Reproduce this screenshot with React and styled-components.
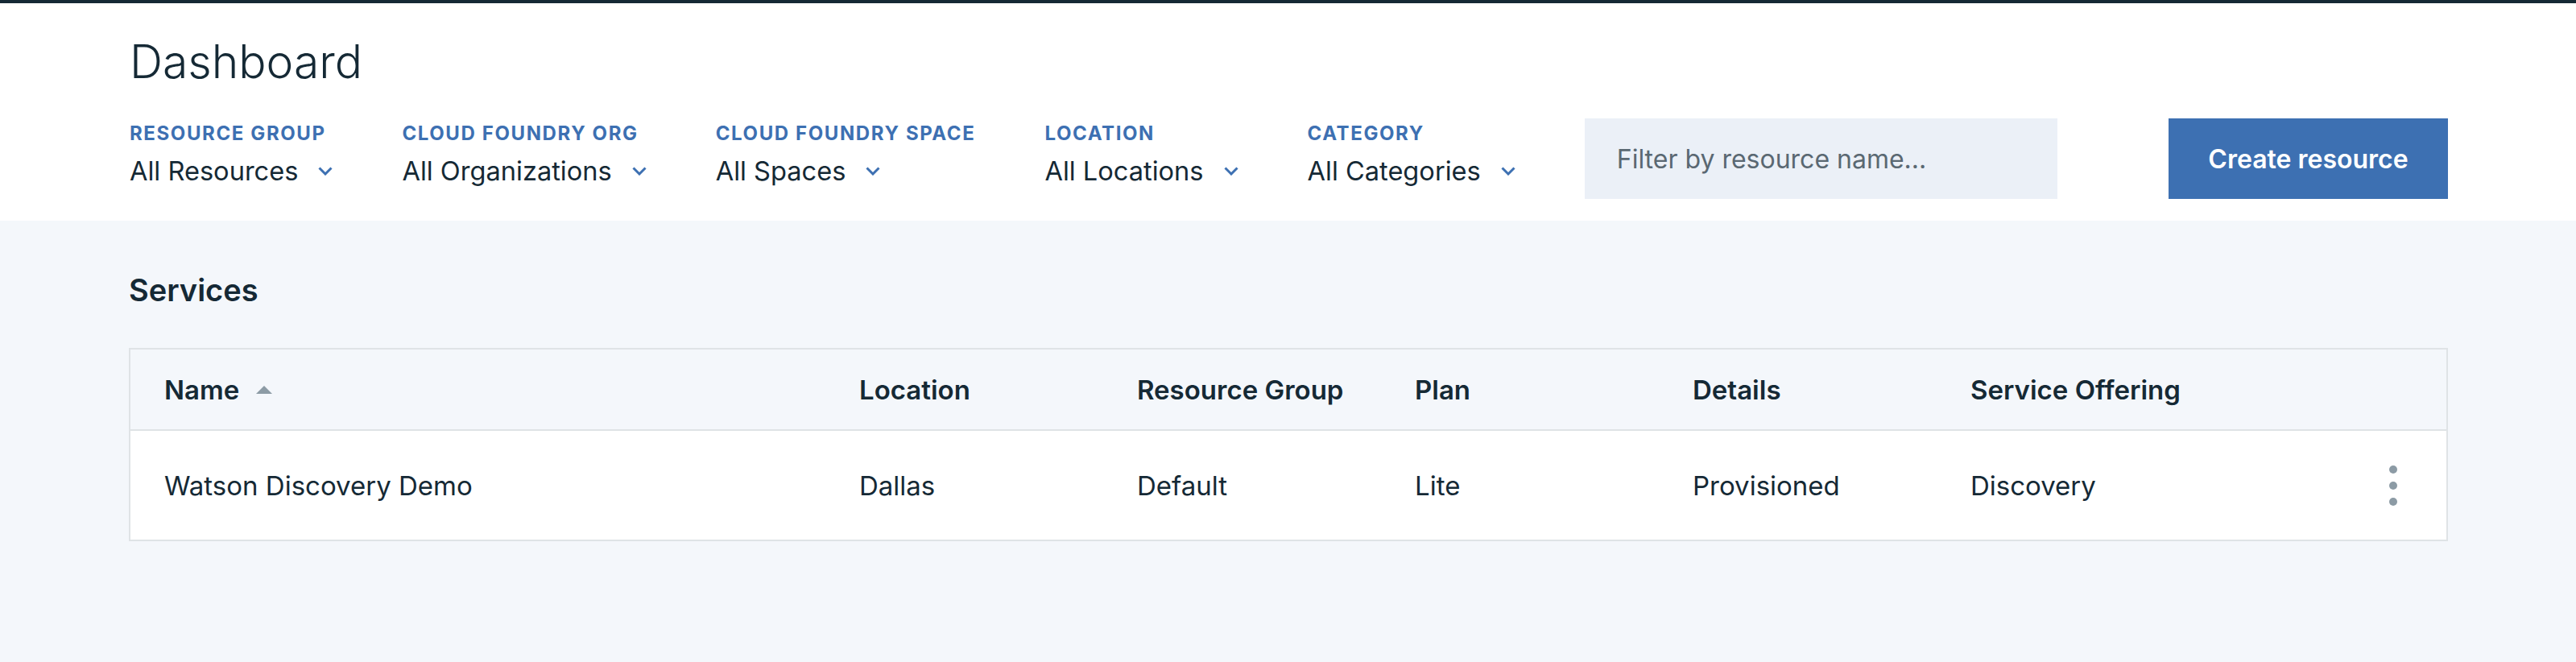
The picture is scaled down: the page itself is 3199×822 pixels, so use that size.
import React from 'react'
import styled, { createGlobalStyle } from 'styled-components'

const GlobalStyle = createGlobalStyle`
  body {
    margin: 0;
    background: #f4f7fb;
    color: #152935;
    font-family: Inter, 'Noto Sans', sans-serif;
  }
`

const Header = styled.header`
  background: #ffffff;
  border-top: 4px solid #152935;
  padding: 41px 159px 27px 161px;
`

const Title = styled.h1`
  margin: 0;
  font-size: 57px;
  font-weight: 300;
  line-height: 64px;
`

const Toolbar = styled.div`
  display: flex;
  align-items: flex-start;
  margin-top: 38px;
`

const Filter = styled.div`
  display: flex;
  flex-direction: column;
  padding-top: 7px;
  margin-right: 86px;
`

const FilterLabel = styled.span`
  font-size: 24px;
  font-weight: 700;
  line-height: 24px;
  letter-spacing: 1.6px;
  color: #3d70b2;
  text-transform: uppercase;
`

const FilterValue = styled.button`
  display: flex;
  align-items: center;
  gap: 25px;
  margin-top: 14px;
  padding: 0;
  border: none;
  background: none;
  font-family: inherit;
  font-size: 32.6px;
  line-height: 40px;
  color: #152935;
  cursor: pointer;
`

const Search = styled.input`
  width: 587px;
  height: 100px;
  box-sizing: border-box;
  padding: 0 40px;
  border: none;
  background: #ebf0f7;
  font-family: inherit;
  font-size: 32px;
  color: #152935;
  &::placeholder {
    color: #5a6872;
  }
`

const CreateButton = styled.button`
  margin-left: auto;
  width: 347px;
  height: 100px;
  border: none;
  background: #3d70b2;
  color: #ffffff;
  font-family: inherit;
  font-size: 32px;
  font-weight: 600;
  cursor: pointer;
`

const Main = styled.main`
  padding: 62px 159px 0 160px;
`

const SectionTitle = styled.h2`
  margin: 0;
  font-size: 38px;
  font-weight: 600;
  line-height: 48px;
`

const Table = styled.div`
  margin-top: 48px;
  border: 2px solid #dfe3e6;
`

const Row = styled.div`
  display: grid;
  grid-template-columns: 905px repeat(5, 345px) 1fr;
  align-items: center;
  height: ${p => (p.$head ? '99px' : '135px')};
  background: ${p => (p.$head ? '#f4f7fb' : '#ffffff')};
  border-bottom: ${p => (p.$head ? '2px solid #dfe3e6' : 'none')};
`

const Cell = styled.div`
  display: flex;
  align-items: center;
  padding-left: ${p => (p.$first ? '42px' : '0')};
  font-size: 33px;
  font-weight: ${p => (p.$head ? 600 : 400)};
  white-space: nowrap;
`

const Actions = styled.div`
  display: flex;
  justify-content: flex-end;
  padding-right: 61px;
`

const Chevron = () => (
  <svg width="18" height="11" viewBox="0 0 18 11">
    <polyline points="1.5,1.5 9,9 16.5,1.5" fill="none" stroke="#3d70b2" strokeWidth="3" />
  </svg>
)

const SortUp = () => (
  <svg width="20" height="10" viewBox="0 0 20 10" style={{ marginLeft: 21 }}>
    <polygon points="0,10 10,0 20,10" fill="#8c9ba5" />
  </svg>
)

const Kebab = () => (
  <svg width="10" height="50" viewBox="0 0 10 50">
    <circle cx="5" cy="5" r="5" fill="#8c9ba5" />
    <circle cx="5" cy="25" r="5" fill="#8c9ba5" />
    <circle cx="5" cy="45" r="5" fill="#8c9ba5" />
  </svg>
)

const filters = [
  ['Resource Group', 'All Resources'],
  ['Cloud Foundry Org', 'All Organizations'],
  ['Cloud Foundry Space', 'All Spaces'],
  ['Location', 'All Locations'],
  ['Category', 'All Categories']
]

const columns = ['Name', 'Location', 'Resource Group', 'Plan', 'Details', 'Service Offering']
const services = [
  ['Watson Discovery Demo', 'Dallas', 'Default', 'Lite', 'Provisioned', 'Discovery']
]

export default function App() {
  return (
    <>
      <GlobalStyle />
      <Header>
        <Title>Dashboard</Title>
        <Toolbar>
          {filters.map(([label, value]) => (
            <Filter key={label}>
              <FilterLabel>{label}</FilterLabel>
              <FilterValue>
                {value}
                <Chevron />
              </FilterValue>
            </Filter>
          ))}
          <Search placeholder="Filter by resource name..." />
          <CreateButton>Create resource</CreateButton>
        </Toolbar>
      </Header>
      <Main>
        <SectionTitle>Services</SectionTitle>
        <Table>
          <Row $head>
            {columns.map((c, i) => (
              <Cell key={c} $head $first={i === 0}>
                {c}
                {i === 0 && <SortUp />}
              </Cell>
            ))}
            <div />
          </Row>
          {services.map(row => (
            <Row key={row[0]}>
              {row.map((v, i) => (
                <Cell key={i} $first={i === 0}>{v}</Cell>
              ))}
              <Actions>
                <Kebab />
              </Actions>
            </Row>
          ))}
        </Table>
      </Main>
    </>
  )
}
